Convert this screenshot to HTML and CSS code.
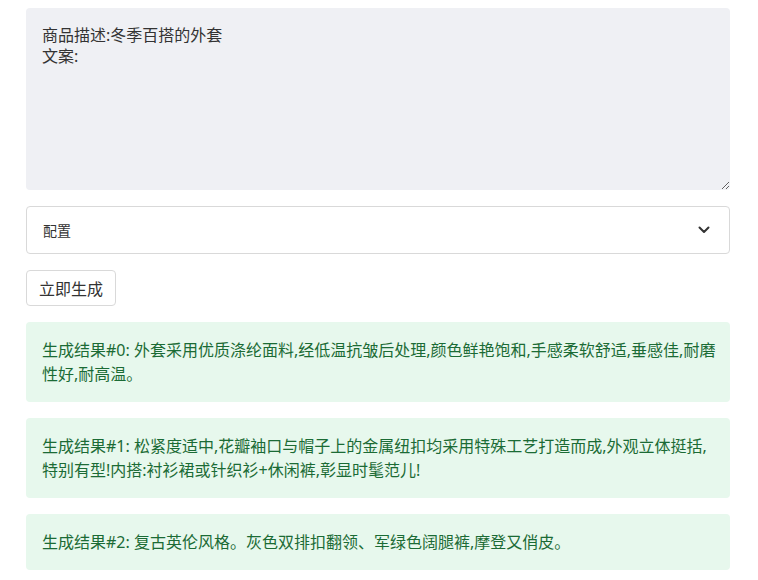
FILE: index.html
```html
<!DOCTYPE html>
<html lang="zh">
<head>
<meta charset="utf-8">
<link rel="stylesheet" href="styles.css">
</head>
<body>
<main class="page">
  <textarea class="prompt">商品描述:冬季百搭的外套
文案:</textarea>
  <div class="config">
    <span class="config-label">配置</span>
    <svg class="chevron" width="12" height="8" viewBox="0 0 12 8"><path d="M1.5 1.5 L6 6 L10.5 1.5" fill="none" stroke="#333" stroke-width="2" stroke-linecap="round" stroke-linejoin="round"/></svg>
  </div>
  <div class="actions"><button class="btn">立即生成</button></div>
  <div class="result">生成结果#0: 外套采用优质涤纶面料,经低温抗皱后处理,颜色鲜艳饱和,手感柔软舒适,垂感佳,耐磨性好,耐高温。</div>
  <div class="result">生成结果#1: 松紧度适中,花瓣袖口与帽子上的金属纽扣均采用特殊工艺打造而成,外观立体挺括,特别有型!内搭:衬衫裙或针织衫+休闲裤,彰显时髦范儿!</div>
  <div class="result">生成结果#2: 复古英伦风格。灰色双排扣翻领、军绿色阔腿裤,摩登又俏皮。</div>
</main>
</body>
</html>
```

FILE: styles.css
```css
html, body {
  margin: 0;
  padding: 0;
  background: #ffffff;
}
body {
  font-family: "Noto Sans", "Noto Sans CJK SC", sans-serif;
  color: #333;
}
.page {
  width: 704px;
  margin: 8px 0 0 26px;
  display: flex;
  flex-direction: column;
}
.prompt {
  display: block;
  box-sizing: border-box;
  width: 704px;
  height: 182px;
  margin: 0;
  padding: 17px 16px;
  border: none;
  border-radius: 4px;
  background: #eff0f4;
  font-family: "Noto Sans", "Noto Sans CJK SC", sans-serif;
  font-size: 16px;
  line-height: 21px;
  color: #333;
  resize: vertical;
  outline: none;
}
.config {
  margin-top: 16px;
  box-sizing: border-box;
  height: 48px;
  border: 1px solid #d9d9d9;
  border-radius: 4px;
  display: flex;
  align-items: center;
  justify-content: space-between;
  padding: 0 19px 0 16px;
}
.config-label {
  font-size: 14px;
  color: #333;
}
.chevron {
  display: block;
}
.actions {
  margin-top: 16px;
  display: flex;
}
.btn {
  box-sizing: border-box;
  height: 36px;
  padding: 0 12px;
  border: 1px solid #d9d9d9;
  border-radius: 4px;
  background: #fff;
  font-family: "Noto Sans", "Noto Sans CJK SC", sans-serif;
  font-size: 16px;
  color: #333;
}
.result {
  margin-top: 16px;
  padding: 16px 10px 16px 16px;
  background: #e7f8ed;
  border-radius: 4px;
  color: #1b6b35;
  font-size: 16px;
  line-height: 24px;
}
```
